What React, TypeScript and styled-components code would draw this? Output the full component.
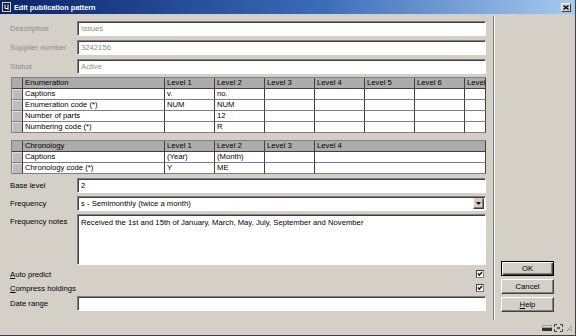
import styled, { createGlobalStyle } from "styled-components";

const Global = createGlobalStyle`
  html, body {
    margin: 0;
    padding: 0;
    background: #d4d0c8;
  }
`;

const fontStack = `"Liberation Sans", Arial, sans-serif`;

const Window = styled.div`
  width: 576px;
  height: 336px;
  box-sizing: border-box;
  display: flex;
  flex-direction: column;
  background: #d4d0c8;
  border-bottom: 1px solid #404040;
  border-right: 1px solid #404040;
  font-family: ${fontStack};
  font-size: 7.7px;
  color: #000;
  overflow: hidden;
`;

const TitleBar = styled.div`
  height: 14px;
  flex: none;
  display: flex;
  align-items: center;
  padding: 0 4px 0 2px;
  background: linear-gradient(to right, #0a246a 0%, #3a6ab8 55%, #a6caf0 100%);
  color: #fff;
  font-weight: bold;
  font-size: 7.3px;
`;

const TitleText = styled.span`
  margin-left: 3px;
  flex: 1;
`;

const CloseButton = styled.div`
  width: 10px;
  height: 9px;
  box-sizing: border-box;
  display: flex;
  align-items: center;
  justify-content: center;
  background: #d4d0c8;
  border: 1px solid;
  border-color: #fff #404040 #404040 #fff;
`;

const Main = styled.div`
  flex: 1;
  display: flex;
  min-height: 0;
`;

const LeftPane = styled.div`
  width: 476px;
  flex: none;
  padding: 7px 0 0 10px;
  display: flex;
  flex-direction: column;
`;

const Separator = styled.div`
  width: 0;
  margin: 2px 0 0 7px;
  border-left: 1px solid #808080;
  border-right: 1px solid #fff;
`;

const RightPane = styled.div`
  display: flex;
  flex-direction: column;
  justify-content: flex-end;
  gap: 3px;
  padding: 0 0 8px 6px;
`;

const Field = styled.div<{ $top?: number; $h?: number; $alignTop?: boolean }>`
  display: flex;
  align-items: ${(p) => (p.$alignTop ? "flex-start" : "center")};
  height: ${(p) => p.$h ?? 15}px;
  margin-top: ${(p) => p.$top ?? 0}px;
  flex: none;
`;

const Label = styled.div<{ $disabled?: boolean; $padTop?: number }>`
  width: 67px;
  flex: none;
  white-space: nowrap;
  color: ${(p) => (p.$disabled ? "#8c8c8c" : "#000")};
  padding-top: ${(p) => p.$padTop ?? 0}px;
`;

const Box = styled.div<{ $disabled?: boolean; $alignTop?: boolean }>`
  flex: 1;
  height: 100%;
  box-sizing: border-box;
  display: flex;
  align-items: ${(p) => (p.$alignTop ? "flex-start" : "center")};
  padding: ${(p) => (p.$alignTop ? "3px 0 0 3px" : "0 0 0 3px")};
  background: #fff;
  border: 1px solid;
  border-color: #808080 #fff #fff #808080;
  box-shadow: inset 1px 1px 0 #404040;
  color: ${(p) => (p.$disabled ? "#8c8c8c" : "#000")};
  white-space: nowrap;
  overflow: hidden;
`;

const BoxText = styled.span`
  flex: 1;
`;

const DropButton = styled.div`
  width: 11px;
  height: 11px;
  box-sizing: border-box;
  margin-right: 1px;
  display: flex;
  align-items: center;
  justify-content: center;
  background: #d4d0c8;
  border: 1px solid;
  border-color: #d4d0c8 #404040 #404040 #fff;
  box-shadow: inset -1px -1px 0 #808080;
`;

const Grid = styled.div<{ $cols: string; $top: number }>`
  display: grid;
  grid-template-columns: ${(p) => p.$cols};
  margin: ${(p) => p.$top}px 0 0 1px;
  border-top: 1px solid #808080;
  border-left: 1px solid #808080;
  flex: none;
`;

const Cell = styled.div<{ $kind: "head" | "sel" | "body" }>`
  height: 11px;
  box-sizing: border-box;
  padding-left: 2px;
  line-height: 10px;
  white-space: nowrap;
  overflow: hidden;
  border-right: 1px solid #404040;
  border-bottom: 1px solid ${(p) => (p.$kind === "head" ? "#404040" : "#808080")};
  background: ${(p) =>
    p.$kind === "head" ? "#acacac" : p.$kind === "sel" ? "#bcbcbc" : "#fff"};
  box-shadow: ${(p) => (p.$kind === "sel" ? "inset 1px 1px 0 #e0e0e0" : "none")};
`;

const CheckRow = styled.div<{ $top?: number }>`
  display: flex;
  align-items: center;
  justify-content: space-between;
  height: 14px;
  margin-top: ${(p) => p.$top ?? 0}px;
  padding-right: 2px;
  flex: none;
`;

const Button = styled.div<{ $default?: boolean }>`
  width: 53px;
  height: 15px;
  box-sizing: border-box;
  display: flex;
  align-items: center;
  justify-content: center;
  background: #d4d0c8;
  border: 1px solid;
  border-color: ${(p) => (p.$default ? "#000" : "#fff #404040 #404040 #fff")};
  box-shadow: ${(p) =>
    p.$default
      ? "inset 1px 1px 0 #fff, inset -1px -1px 0 #404040, inset -2px -2px 0 #808080"
      : "inset -1px -1px 0 #808080"};
`;

const Footer = styled.div`
  height: 15px;
  flex: none;
  display: flex;
  align-items: center;
  justify-content: flex-end;
  gap: 2px;
  padding-right: 2px;
`;

const Check = () => (
  <svg width="8" height="8" viewBox="0 0 8 8">
    <rect x="0.5" y="0.5" width="7" height="7" fill="#fff" stroke="#808080" />
    <path d="M0.5 7.5V0.5H7.5" fill="none" stroke="#404040" />
    <path d="M2 3.5L3.3 5.2L6 2" fill="none" stroke="#000" strokeWidth="1.3" />
  </svg>
);

const enumCols = "11px 142px 50px 50px 50px 50px 50px 50px 1fr";
const enumRows = [
  ["Enumeration", "Level 1", "Level 2", "Level 3", "Level 4", "Level 5", "Level 6", "Level 7"],
  ["Captions", "v.", "no.", "", "", "", "", ""],
  ["Enumeration code (*)", "NUM", "NUM", "", "", "", "", ""],
  ["Number of parts", "", "12", "", "", "", "", ""],
  ["Numbering code (*)", "", "R", "", "", "", "", ""],
];

const chronCols = "11px 142px 50px 50px 50px 1fr";
const chronRows = [
  ["Chronology", "Level 1", "Level 2", "Level 3", "Level 4"],
  ["Captions", "(Year)", "(Month)", "", ""],
  ["Chronology code (*)", "Y", "ME", "", ""],
];

const DataGrid = ({ cols, rows, top }: { cols: string; rows: string[][]; top: number }) => (
  <Grid $cols={cols} $top={top}>
    {rows.map((row, r) => [
      <Cell key={`s${r}`} $kind={r === 0 ? "head" : "sel"} />,
      ...row.map((v, c) => (
        <Cell key={`${r}-${c}`} $kind={r === 0 ? "head" : "body"}>
          {v}
        </Cell>
      )),
    ])}
  </Grid>
);

export default function App() {
  return (
    <>
      <Global />
      <Window>
        <TitleBar>
          <svg width="9" height="10" viewBox="0 0 9 10">
            <rect x="0" y="0" width="9" height="10" fill="#d4d0c8" />
            <rect x="1" y="1" width="7" height="8" fill="#1a1a2a" />
            <path d="M3 2.5V6.5H6V2.5M6 6.5V8" fill="none" stroke="#fff" strokeWidth="1" />
          </svg>
          <TitleText>Edit publication pattern</TitleText>
          <CloseButton>
            <svg width="6" height="5" viewBox="0 0 6 5">
              <path d="M0.5 0.5L5.5 4.5M5.5 0.5L0.5 4.5" stroke="#000" strokeWidth="1.3" />
            </svg>
          </CloseButton>
        </TitleBar>
        <Main>
          <LeftPane>
            <Field>
              <Label $disabled>Description</Label>
              <Box $disabled>Issues</Box>
            </Field>
            <Field $top={4}>
              <Label $disabled>Supplier number</Label>
              <Box $disabled>3242156</Box>
            </Field>
            <Field $top={4}>
              <Label $disabled>Status</Label>
              <Box $disabled>Active</Box>
            </Field>

            <DataGrid cols={enumCols} rows={enumRows} top={3} />
            <DataGrid cols={chronCols} rows={chronRows} top={7} />

            <Field $top={4}>
              <Label>Base level</Label>
              <Box>2</Box>
            </Field>
            <Field $top={3}>
              <Label>Frequency</Label>
              <Box>
                <BoxText>s - Semimonthly (twice a month)</BoxText>
                <DropButton>
                  <svg width="5" height="3" viewBox="0 0 5 3">
                    <path d="M0 0H5L2.5 3Z" fill="#000" />
                  </svg>
                </DropButton>
              </Box>
            </Field>
            <Field $top={3} $h={51} $alignTop>
              <Label $padTop={3}>Frequency notes</Label>
              <Box $alignTop>
                Received the 1st and 15th of January, March, May, July, September and November
              </Box>
            </Field>
            <CheckRow $top={2}>
              <span>
                <u>A</u>uto predict
              </span>
              <Check />
            </CheckRow>
            <CheckRow>
              <span>
                <u>C</u>ompress holdings
              </span>
              <Check />
            </CheckRow>
            <Field $top={1}>
              <Label>Date range</Label>
              <Box />
            </Field>
          </LeftPane>
          <Separator />
          <RightPane>
            <Button $default>OK</Button>
            <Button>Cancel</Button>
            <Button>
              <span>
                <u>H</u>elp
              </span>
            </Button>
          </RightPane>
        </Main>
        <Footer>
          <svg width="10" height="8" viewBox="0 0 10 8">
            <rect x="0" y="1" width="10" height="6" fill="#9a9a9a" />
            <rect x="0" y="4" width="10" height="3" fill="#303030" />
            <rect x="1" y="2" width="8" height="1" fill="#e8e8e8" />
          </svg>
          <svg width="9" height="8" viewBox="0 0 9 8">
            <path
              d="M0.5 0.5H3M6 0.5H8.5V3M8.5 5V7.5H6M3 7.5H0.5V5M0.5 3V0.5"
              fill="none"
              stroke="#404040"
            />
            <rect x="3" y="3" width="3" height="2" fill="#606060" />
          </svg>
          <svg width="8" height="8" viewBox="0 0 8 8">
            <path d="M7 2L2 7M7 5L5 7" stroke="#808080" strokeWidth="1" />
          </svg>
        </Footer>
      </Window>
    </>
  );
}
